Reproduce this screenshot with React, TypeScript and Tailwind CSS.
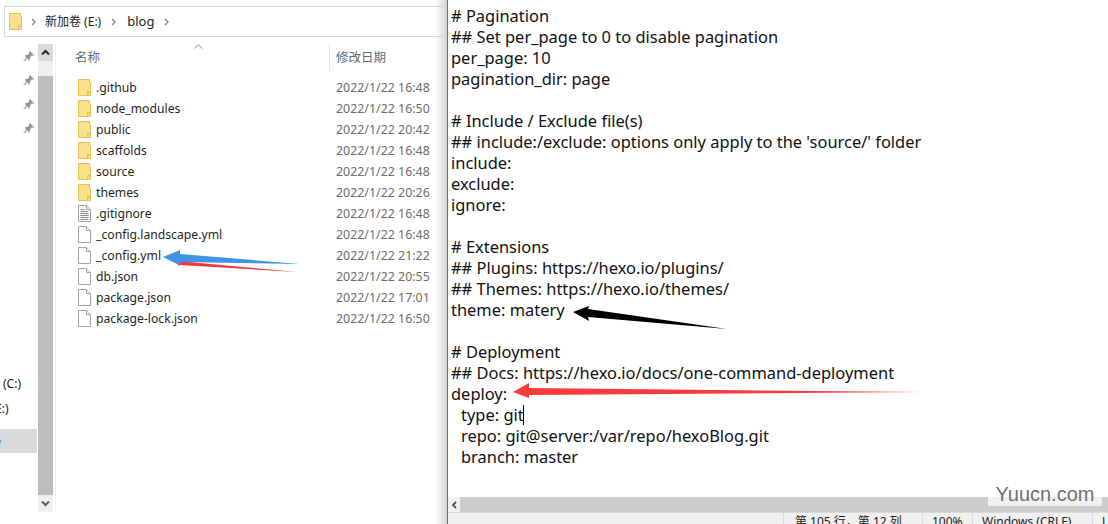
import React from 'react';

const sans = "font-['Noto_Sans','Noto_Sans_CJK_SC',sans-serif]";

const files = [
  { name: '.github', date: '2022/1/22 16:48', type: 'folder' },
  { name: 'node_modules', date: '2022/1/22 16:50', type: 'folder' },
  { name: 'public', date: '2022/1/22 20:42', type: 'folder' },
  { name: 'scaffolds', date: '2022/1/22 16:48', type: 'folder' },
  { name: 'source', date: '2022/1/22 16:48', type: 'folder' },
  { name: 'themes', date: '2022/1/22 20:26', type: 'folder' },
  { name: '.gitignore', date: '2022/1/22 16:48', type: 'text' },
  { name: '_config.landscape.yml', date: '2022/1/22 16:48', type: 'file' },
  { name: '_config.yml', date: '2022/1/22 21:22', type: 'file' },
  { name: 'db.json', date: '2022/1/22 20:55', type: 'file' },
  { name: 'package.json', date: '2022/1/22 17:01', type: 'file' },
  { name: 'package-lock.json', date: '2022/1/22 16:50', type: 'file' },
];

const lines = [
  '# Pagination',
  '## Set per_page to 0 to disable pagination',
  'per_page: 10',
  'pagination_dir: page',
  '',
  '# Include / Exclude file(s)',
  "## include:/exclude: options only apply to the 'source/' folder",
  'include:',
  'exclude:',
  'ignore:',
  '',
  '# Extensions',
  '## Plugins: https://hexo.io/plugins/',
  '## Themes: https://hexo.io/themes/',
  'theme: matery',
  '',
  '# Deployment',
  '## Docs: https://hexo.io/docs/one-command-deployment',
  'deploy:',
  '  type: git',
  '  repo: git@server:/var/repo/hexoBlog.git',
  '  branch: master',
];

function FolderIcon() {
  return (
    <svg width="13" height="17" viewBox="0 0 13 17" className="shrink-0">
      <path d="M.5.5H11.5V3.5L12.5 4V16.5H.5Z" fill="#fbe08f" stroke="#e9c04f" />
      <path d="M9.5 16.5V12.5H12.5" fill="#f5cf62" stroke="#e9c04f" />
    </svg>
  );
}

function FileIcon({ lined }: { lined?: boolean }) {
  return (
    <svg width="13" height="17" viewBox="0 0 13 17" className="shrink-0">
      <path d="M.5.5H8.5L12.5 4.5V16.5H.5Z" fill="#fff" stroke="#a3a3a3" />
      <path d="M8.5.5V4.5H12.5" fill="#eee" stroke="#a3a3a3" />
      {lined && <path d="M2.5 4.5H7M2.5 6.5H10.5M2.5 8.5H10.5M2.5 10.5H10.5M2.5 12.5H10.5M2.5 14.5H10.5" stroke="#8a8a8a" />}
    </svg>
  );
}

function PinIcon() {
  return (
    <svg width="12" height="12" viewBox="0 0 12 12">
      <path d="M6.8 .8 11.2 5.2 10.2 5.8 8.8 5.6 7 7.4 7 9.6 6 10.2 1.8 6 2.4 5 4.6 5 6.4 3.2 6.2 1.8Z" fill="#8b99a5" />
      <path d="M3.6 8.4.8 11.2" stroke="#8b99a5" strokeWidth="1.2" />
    </svg>
  );
}

function Chevron({ down }: { down?: boolean }) {
  return (
    <svg width="9" height="7" viewBox="0 0 9 7">
      <path d={down ? 'M1 1.5 4.5 5 8 1.5' : 'M1 5.5 4.5 2 8 5.5'} fill="none" stroke={down ? '#5f5f5f' : '#222'} strokeWidth="2" />
    </svg>
  );
}

function Sep() {
  return (
    <svg width="5" height="8" viewBox="0 0 5 8" className="shrink-0">
      <path d="M1 1 4 4 1 7" fill="none" stroke="#8a8a8a" strokeWidth="1.4" />
    </svg>
  );
}

function Explorer() {
  return (
    <div className={`relative w-[447px] h-full shrink-0 bg-white ${sans}`}>
      <div className="h-[6px]" />
      <div className="ml-[4px] h-[31px] border border-[#d9d9d9] flex items-center pl-[4px] text-[12px] text-[#222]">
        <FolderIcon />
        <div className="ml-[9px]"><Sep /></div>
        <span className="ml-[9px]">新加卷 (E:)</span>
        <div className="ml-[10px]"><Sep /></div>
        <span className="ml-[11px] text-[13px]">blog</span>
        <div className="ml-[10px]"><Sep /></div>
      </div>
      <div className="mt-[7px] flex h-[468px]">
        <div className="w-[38px] shrink-0 flex flex-col overflow-hidden text-[12px] text-[#1a1a1a]">
          {[0, 1, 2, 3].map((i) => (
            <div key={i} className="h-[24px] flex items-center justify-end pr-[3px]"><PinIcon /></div>
          ))}
          <div className="h-[231px]" />
          <div className="h-[25px] flex items-center pl-[3px]">(C:)</div>
          <div className="h-[25px] flex items-center -ml-[5px]">E:)</div>
          <div className="mt-[8px] h-[24px] mr-[1px] bg-[#d9d9d9] flex items-center">
            <div className="w-[1px] h-[3px] bg-[#3fb6e8]" />
          </div>
        </div>
        <div className="w-[15px] shrink-0 flex flex-col bg-[#efefef]">
          <div className="h-[17px] bg-[#dadada] flex items-center justify-center"><Chevron /></div>
          <div className="h-[15px]" />
          <div className="flex-1 bg-[#bdbdbd]" />
          <div className="h-[17px] flex items-center justify-center"><Chevron down /></div>
        </div>
        <div className="w-[3px] shrink-0 border-r border-[#f0f0f0]" />
        <div className="flex-1 min-w-0">
          <div className="relative h-[27px] flex items-center text-[12.5px] text-[#5f6b78]">
            <span className="ml-[19px] w-[254px] pt-[2px]">名称</span>
            <div className="w-[1px] h-[27px] bg-[#e5e5e5]" />
            <span className="ml-[6px] pt-[2px]">修改日期</span>
            <svg width="9" height="5" viewBox="0 0 9 5" className="absolute left-[138px] top-0">
              <path d="M.5 4.5 4.5 .8 8.5 4.5" fill="none" stroke="#8a8a8a" />
            </svg>
          </div>
          <div className="mt-[6px] text-[12.2px]">
            {files.map((f) => (
              <div key={f.name} className="h-[21px] flex items-center">
                <div className="w-[40px] pl-[22px] shrink-0">
                  {f.type === 'folder' ? <FolderIcon /> : <FileIcon lined={f.type === 'text'} />}
                </div>
                <span className="w-[240px] shrink-0 pt-[2px] text-[#1f1f1f]">{f.name}</span>
                <span className="pt-[2px] text-[12.4px] text-[#6d6d6d]">{f.date}</span>
              </div>
            ))}
          </div>
        </div>
      </div>
      {/* window shadow */}
      <div className="absolute right-0 top-0 bottom-0 w-[12px] bg-gradient-to-r from-transparent to-[#d4d4d4]" />
    </div>
  );
}

function Editor() {
  return (
    <div className="flex-1 min-w-0 h-full flex flex-col border-l border-[#6f6f6f] bg-white">
      <div className={`h-[497px] pl-[3px] pt-[5px] text-[16.45px] leading-[21px] text-[#111] overflow-hidden whitespace-pre ${sans}`}>
        {lines.map((l, i) => (
          <div key={i} className={l.startsWith('  ') ? 'h-[21px] relative pl-[10px]' : 'h-[21px] relative'}>
            {l.trim()}
            {l === '  type: git' && <span className="absolute left-[72px] top-[1px] w-[1px] h-[20px] bg-black" />}
          </div>
        ))}
      </div>
      <div className="h-[15px] flex bg-[#cdcdcd]">
        <div className="w-[12px] bg-[#f0f0f0] flex items-center justify-center">
          <svg width="6" height="8" viewBox="0 0 6 8">
            <path d="M5 1 2 4 5 7" fill="none" stroke="#555" strokeWidth="1.8" />
          </svg>
        </div>
      </div>
      <div className={`h-[12px] border-t border-[#d9d9d9] bg-[#f0f0f0] flex overflow-hidden text-[12px] leading-[18px] text-[#222] ${sans}`}>
        <div className="w-[335px] shrink-0" />
        <div className="w-[139px] shrink-0 border-l border-[#d9d9d9] pl-[11px] whitespace-pre">第 105 行，第 12 列</div>
        <div className="w-[50px] shrink-0 border-l border-[#d9d9d9] pl-[9px]">100%</div>
        <div className="w-[120px] shrink-0 border-l border-[#d9d9d9] pl-[9px]">Windows (CRLF)</div>
        <div className="flex-1 border-l border-[#d9d9d9] pl-[9px]">U</div>
      </div>
    </div>
  );
}

function Arrows() {
  return (
    <svg width="1108" height="524" viewBox="0 0 1108 524" className="absolute left-0 top-0 pointer-events-none">
      <path d="M178 261 297 272 180 265 178 266Z" fill="#f5373c" />
      <path d="M163 257 180 250 180 254 300 264 180 262 180 265.5Z" fill="#3f94e4" />
      <path d="M573 312 589 306 588 309 727 329 588 317 589 321Z" fill="#000" />
      <path d="M513 392 529 383 529 388 921 392 529 395 529 398Z" fill="#fb3a3d" />
    </svg>
  );
}

export default function App() {
  return (
    <div className="relative w-[1108px] h-[524px] flex overflow-hidden bg-white">
      <Explorer />
      <Editor />
      <Arrows />
      <div className="absolute left-[988px] top-[482px] w-[114px] h-[24px] bg-white/70 flex items-center justify-center font-['Liberation_Sans',sans-serif] text-[20px] text-[#6f6f6f]">
        Yuucn.com
      </div>
    </div>
  );
}
